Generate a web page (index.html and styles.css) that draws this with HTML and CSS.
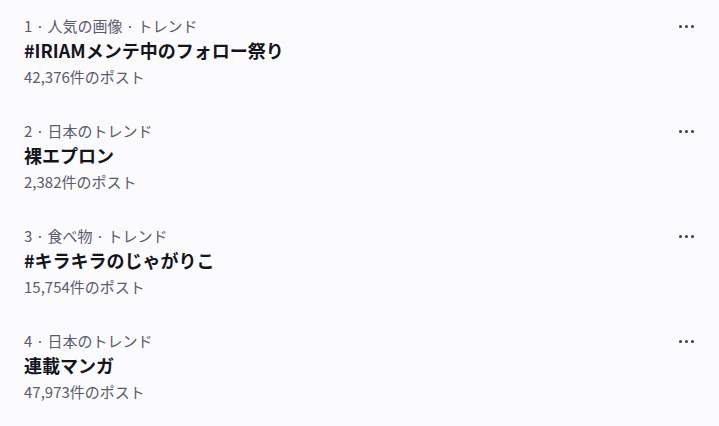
FILE: index.html
```html
<!DOCTYPE html>
<html lang="ja">
<head>
<meta charset="utf-8">
<link rel="stylesheet" href="styles.css">
</head>
<body>
<div class="trends">
  <div class="trend">
    <div class="info">
      <div class="meta">1 · 人気の画像 · トレンド</div>
      <div class="title">#IRIAMメンテ中のフォロー祭り</div>
      <div class="count">42,376件のポスト</div>
    </div>
    <div class="more"><span></span><span></span><span></span></div>
  </div>
  <div class="trend">
    <div class="info">
      <div class="meta">2 · 日本のトレンド</div>
      <div class="title">裸エプロン</div>
      <div class="count">2,382件のポスト</div>
    </div>
    <div class="more"><span></span><span></span><span></span></div>
  </div>
  <div class="trend">
    <div class="info">
      <div class="meta">3 · 食べ物 · トレンド</div>
      <div class="title">#キラキラのじゃがりこ</div>
      <div class="count">15,754件のポスト</div>
    </div>
    <div class="more"><span></span><span></span><span></span></div>
  </div>
  <div class="trend">
    <div class="info">
      <div class="meta">4 · 日本のトレンド</div>
      <div class="title">連載マンガ</div>
      <div class="count">47,973件のポスト</div>
    </div>
    <div class="more"><span></span><span></span><span></span></div>
  </div>
</div>
</body>
</html>
```

FILE: styles.css
```css
html, body {
  margin: 0;
  padding: 0;
  background: #fbfbfe;
}
body {
  font-family: "Noto Sans CJK JP", "Noto Sans", sans-serif;
  width: 719px;
  height: 426px;
  overflow: hidden;
}
.trends {
  display: flex;
  flex-direction: column;
}
.trend {
  display: flex;
  justify-content: space-between;
  align-items: flex-start;
  padding: 16px 24px 18px 24px;
  height: 71px;
}
.info {
  display: flex;
  flex-direction: column;
}
.meta {
  font-size: 15px;
  line-height: 20px;
  color: #5c5a6e;
}
.title {
  margin-top: 2px;
  font-size: 18px;
  line-height: 24px;
  font-weight: 700;
  color: #14141c;
}
.count {
  margin-top: 5px;
  font-size: 15px;
  line-height: 20px;
  color: #5c5a6e;
}
.more {
  display: flex;
  gap: 3px;
  margin-top: 9px;
  margin-right: 1px;
}
.more span {
  width: 3px;
  height: 3px;
  border-radius: 50%;
  background: #3a3a4c;
}
```
